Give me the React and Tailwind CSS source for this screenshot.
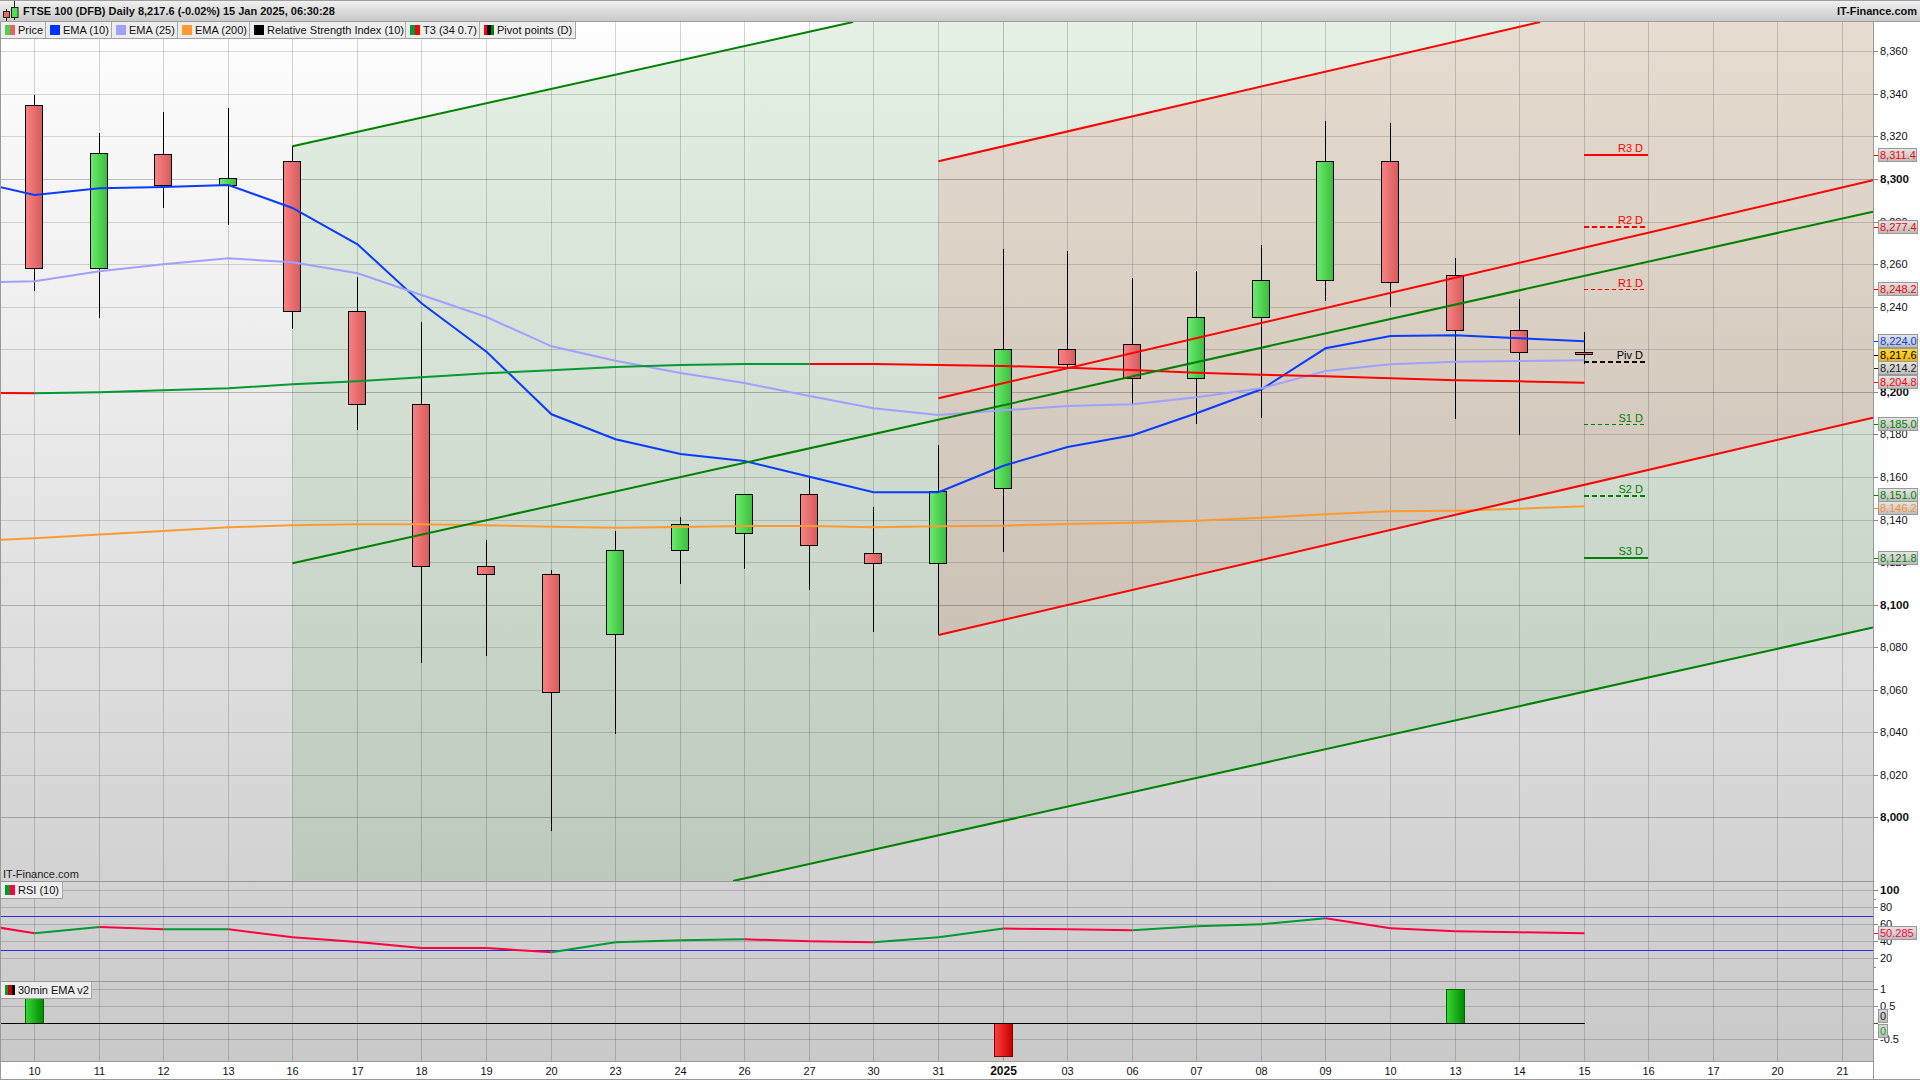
import React from "react";

const X = (i) => Math.round(34 + 64.57 * i) + 0.5;
const FONT = "font-['Liberation_Sans',Arial,sans-serif]";

const candles = [
  ["r", 95, 105.3, 268.3, 290.7],
  ["g", 133, 153.3, 268.3, 317.7],
  ["r", 112, 154.3, 185.3, 207.7],
  ["g", 108, 178.3, 185.3, 224.7],
  ["r", 146.3, 161.3, 311.3, 328.7],
  ["r", 277, 311.3, 404.3, 429.7],
  ["r", 322.3, 404.3, 566.3, 662.7],
  ["r", 540, 566.3, 574.3, 655.7],
  ["r", 570, 574.3, 692.3, 830.7],
  ["g", 531, 550.3, 634.3, 733.7],
  ["g", 517, 524.3, 550.3, 583.7],
  ["g", 494.3, 494.3, 533.3, 568.7],
  ["r", 477.7, 494.3, 545.3, 589.7],
  ["r", 507, 553.3, 563.3, 631.7],
  ["g", 445, 491.3, 563.3, 635],
  ["g", 249, 349.3, 488.3, 552],
  ["r", 251, 349.3, 364.7, 366.7],
  ["r", 278, 344.3, 378.3, 404],
  ["g", 271, 317.3, 378.3, 423.7],
  ["g", 245, 280.3, 317.3, 417.7],
  ["g", 121, 161.3, 280.3, 301],
  ["r", 123, 161.3, 282.3, 307],
  ["r", 258, 275.3, 330.3, 419],
  ["r", 299, 330.3, 352.3, 434.7],
];

const ema10 = [195, 188.3, 187, 185, 208, 244.3, 303.3, 351.7, 414.3, 439.3, 454, 461, 476.7, 492.3, 492.3, 465.7, 447, 435.3, 413.3, 389.3, 348.3, 336, 335.3, 338.3, 341.3];
const ema25 = [281.3, 271.3, 264.3, 258.3, 262.3, 273.3, 295, 317, 346.3, 360.7, 373, 383, 396, 408.3, 415, 410.3, 406, 404.3, 397.3, 388.3, 371, 364.3, 361.7, 361, 360.3];
const ema200 = [538.3, 534.5, 531, 527.3, 525.3, 524.3, 524.3, 525.3, 526.7, 527.7, 527, 526, 526, 527.3, 526.3, 525.7, 524, 522.7, 520.7, 517.7, 514.3, 511.3, 510.7, 508.7, 506.3];
const t3 = [393.3, 392.3, 390.3, 388.3, 384.3, 381.3, 377.3, 373.3, 370.3, 367, 365, 364, 364, 364, 365, 366, 367.7, 370, 372.7, 374.7, 376.3, 378.3, 380.3, 381.3, 382.7];
const rsi = [933.3, 927, 929.3, 929.3, 937.3, 942, 948, 948, 952.3, 942.3, 940.3, 939.3, 941.3, 942.3, 937.3, 928.5, 929.3, 930.3, 926.3, 924.3, 918.3, 928.3, 931.3, 932.3, 933.3];

const pts = (arr, from = 0, to = arr.length - 1) =>
  arr.slice(from, to + 1).map((y, k) => `${X(from + k)},${y}`).join(" ");

const dates = ["10", "11", "12", "13", "16", "17", "18", "19", "20", "23", "24", "26", "27", "30", "31", "2025", "03", "06", "07", "08", "09", "10", "13", "14", "15", "16", "17", "20", "21"];
const priceGrid = [51, 94, 136, 179, 222, 264, 307, 349, 392, 434, 477, 520, 562, 605, 647, 690, 732, 775, 817];
const strongGrid = [179, 392, 605, 817];

const priceLabels = [
  ["8,360", 51], ["8,340", 94], ["8,320", 136], ["8,300", 179, true], ["8,280", 222], ["8,260", 264],
  ["8,240", 307], ["8,200", 392, true], ["8,180", 434], ["8,160", 477], ["8,140", 520], ["8,120", 562],
  ["8,100", 605, true], ["8,080", 647], ["8,060", 690], ["8,040", 732], ["8,020", 775], ["8,000", 817, true],
  ["100", 890, true], ["80", 907], ["60", 924], ["40", 941], ["20", 958],
  ["1", 989], ["0.5", 1006], ["-0.5", 1039],
];
const minorTicks = [899, 967];

const tags = [
  ["8,311.4", 155, "#ff0000"],
  ["8,277.4", 227, "#ff0000"],
  ["8,248.2", 289, "#ff0000"],
  ["8,224.0", 341, "#0040ff"],
  ["8,217.6", 354.5, "#000000", true],
  ["8,214.2", 367.5, "#222222"],
  ["8,204.8", 382, "#ff0000"],
  ["8,185.0", 424, "#008000"],
  ["8,151.0", 494.5, "#008000"],
  ["8,146.2", 508, "#ff8f2e"],
  ["8,121.8", 558, "#008000"],
  ["50.285", 933, "#ff0040"],
];

const pivots = [
  ["R3 D", 155, "#ff0000", 2, null, 1648],
  ["R2 D", 227, "#ff0000", 2, "5 3", 1648],
  ["R1 D", 289.5, "#ff0000", 1, "4 3", 1644],
  ["Piv D", 362, "#000000", 2, "5 3", 1648],
  ["S1 D", 424.5, "#008000", 1, "4 3", 1644],
  ["S2 D", 496, "#008000", 2, "5 3", 1648],
  ["S3 D", 558, "#008000", 2, null, 1648],
];

function VGrid({ y1, y2 }) {
  return dates.map((d, i) => (
    <line key={i} x1={X(i)} x2={X(i)} y1={y1} y2={y2} stroke="#000000" strokeOpacity={d === "2025" ? 0.22 : 0.16} shapeRendering="crispEdges" />
  ));
}

function HLine({ y, o = 0.15, color = "#000000", x2 = 1873, w = 1 }) {
  return <line x1="1" x2={x2} y1={y + 0.5} y2={y + 0.5} stroke={color} strokeOpacity={o} strokeWidth={w} shapeRendering="crispEdges" />;
}

function Candle({ i, c }) {
  const [col, wt, bt, bb, wb] = c;
  const x = X(i);
  return (
    <g shapeRendering="crispEdges">
      <line x1={x} x2={x} y1={wt} y2={wb} stroke="#000" />
      <rect x={x - 9} y={Math.round(bt) + 0.5} width="17" height={Math.round(bb - bt)} fill={col === "g" ? "url(#cg)" : "url(#cr)"} stroke="#000" />
    </g>
  );
}

function Swatch({ colors }) {
  return (
    <span className="flex w-[10px] h-[10px] shrink-0">
      {colors.map((c, i) => (
        <span key={i} className="flex-1 h-full" style={{ background: c }} />
      ))}
    </span>
  );
}

function LegendItem({ colors, label, w }) {
  return (
    <div className={`flex items-center gap-[3px] pl-[4px] h-full border-r border-[#a8a8a8] whitespace-nowrap text-[#111] ${w}`}>
      <Swatch colors={colors} />
      <span>{label}</span>
    </div>
  );
}

function MainChart() {
  return (
    <svg className="block w-full h-full" viewBox="1 22 1872 859">
      <defs>
        <linearGradient id="cr" x1="0" x2="1" y1="0" y2="0">
          <stop offset="0" stopColor="#f98282" />
          <stop offset="1" stopColor="#d65c5c" />
        </linearGradient>
        <linearGradient id="cg" x1="0" x2="1" y1="0" y2="0">
          <stop offset="0" stopColor="#6cec6c" />
          <stop offset="1" stopColor="#3cbc3c" />
        </linearGradient>
      </defs>
      <polygon points="292.5,146.3 853,22 1873,22 1873,627.5 733,881 292.5,881" fill="#008000" fillOpacity="0.1" />
      <polygon points="938.5,161.3 1540,22 1873,22 1873,417.7 938.5,635" fill="#ff0000" fillOpacity="0.085" />
      <VGrid y1={22} y2={881} />
      {priceGrid.map((y) => (
        <HLine key={y} y={y} o={strongGrid.includes(y) ? 0.24 : 0.15} />
      ))}
      {candles.map((c, i) => (
        <Candle key={i} i={i} c={c} />
      ))}
      <g shapeRendering="crispEdges">
        <line x1={X(24)} x2={X(24)} y1="332" y2="364" stroke="#000" />
        <rect x={X(24) - 9} y="352.5" width="17" height="2" fill="url(#cr)" stroke="#000" />
      </g>
      <g fill="none" strokeWidth="2">
        <polyline points={`0,187 ${pts(ema10)}`} stroke="#0a3cff" />
        <polyline points={`0,282 ${pts(ema25)}`} stroke="#a0a0ff" />
        <polyline points={`0,539.7 ${pts(ema200)}`} stroke="#ff9a33" />
        <polyline points={`0,393 ${X(0)},393.3`} stroke="#ff0000" />
        <polyline points={pts(t3, 0, 12)} stroke="#009933" />
        <polyline points={pts(t3, 12, 24)} stroke="#ff0000" />
        <line x1="292.5" y1="146.3" x2="853" y2="22" stroke="#008000" />
        <line x1="292.5" y1="563.3" x2="1873" y2="211.7" stroke="#008000" />
        <line x1="733" y1="881" x2="1873" y2="627.5" stroke="#008000" />
        <line x1="938.5" y1="161.3" x2="1540" y2="22" stroke="#ff0000" />
        <line x1="938.5" y1="398.3" x2="1873" y2="180.3" stroke="#ff0000" />
        <line x1="938.5" y1="635" x2="1873" y2="417.7" stroke="#ff0000" />
      </g>
      {pivots.map(([label, y, color, w, dash, end]) => (
        <g key={label}>
          <line x1="1584" x2={end} y1={y} y2={y} stroke={color} strokeWidth={w} strokeDasharray={dash || undefined} shapeRendering="crispEdges" />
          <text x="1643" y={y - 3} textAnchor="end" fill={color} fontSize="11">{label}</text>
        </g>
      ))}
    </svg>
  );
}

function RsiChart() {
  return (
    <svg className="block w-full h-full" viewBox="1 882 1872 99">
      <VGrid y1={882} y2={981} />
      {[890, 907, 924, 941, 958].map((y) => (
        <HLine key={y} y={y} o={0.16} />
      ))}
      <HLine y={916} o={1} color="#2a2ae6" />
      <HLine y={950} o={1} color="#2a2ae6" />
      <g fill="none" strokeWidth="2">
        <polyline points={`0,927.7 ${pts(rsi, 0, 0)}`} stroke="#ff0040" />
        {rsi.slice(0, -1).map((y, i) => {
          const n = rsi[i + 1];
          const green = [0, 2, 8, 9, 10, 13, 14, 17, 18, 19].includes(i);
          return <line key={i} x1={X(i)} y1={y} x2={X(i + 1)} y2={n} stroke={green ? "#009933" : "#ff0040"} />;
        })}
      </g>
    </svg>
  );
}

function EmaChart() {
  return (
    <svg className="block w-full h-full" viewBox="1 982 1872 79">
      <defs>
        <linearGradient id="bg" x1="0" x2="1" y1="0" y2="0">
          <stop offset="0" stopColor="#36d836" />
          <stop offset="1" stopColor="#008a00" />
        </linearGradient>
        <linearGradient id="br" x1="0" x2="1" y1="0" y2="0">
          <stop offset="0" stopColor="#ff4040" />
          <stop offset="1" stopColor="#c40000" />
        </linearGradient>
      </defs>
      <VGrid y1={982} y2={1061} />
      {[989, 1006, 1039].map((y) => (
        <HLine key={y} y={y} o={0.16} />
      ))}
      <g shapeRendering="crispEdges">
        <rect x={X(0) - 9} y="989.5" width="18" height="33.5" fill="url(#bg)" stroke="#006600" />
        <rect x={X(22) - 9} y="989.5" width="18" height="33.5" fill="url(#bg)" stroke="#006600" />
        <rect x={X(15) - 9} y="1023.5" width="18" height="33" fill="url(#br)" stroke="#800000" />
      </g>
      <line x1="1" x2={X(24)} y1="1023.5" y2="1023.5" stroke="#000" shapeRendering="crispEdges" />
    </svg>
  );
}

export default function App() {
  return (
    <div className={`${FONT} w-[1920px] h-[1080px] flex flex-col bg-white border-b border-[#999] overflow-hidden text-[11px] text-[#111]`}>
      <header className="h-[22px] shrink-0 flex items-center justify-between border-y border-[#9c9c9c] bg-gradient-to-b from-[#f0f0f0] to-[#c9c9c9] pl-[3px] pr-[3px] font-bold text-[11px]">
        <div className="flex items-center gap-[4px]">
          <svg width="16" height="20" viewBox="0 0 16 20">
            <line x1="3.5" x2="3.5" y1="8" y2="20" stroke="#222" />
            <rect x="0.5" y="10.5" width="6" height="6" fill="#e86a6a" stroke="#222" />
            <line x1="11.5" x2="11.5" y1="0" y2="19" stroke="#222" />
            <rect x="8.5" y="6.5" width="6.5" height="10" fill="#55dd55" stroke="#222" />
          </svg>
          <span>FTSE 100 (DFB) Daily 8,217.6 (-0.02%) 15 Jan 2025, 06:30:28</span>
        </div>
        <span>IT-Finance.com</span>
      </header>

      <div className="flex flex-1 min-h-0">
        <div className="w-[1874px] h-full flex flex-col border-x border-[#999] bg-gradient-to-b from-[#fefefe] to-[#c8c8c8]">
          <section className="relative h-[859px]">
            <MainChart />
            <div className="absolute left-0 top-0 h-[17px] flex bg-[#ededed] border-b border-[#a0a0a0]">
              <LegendItem w="w-[45px]" colors={["#50d050", "#e06464"]} label="Price" />
              <LegendItem w="w-[66px]" colors={["#0033ff"]} label="EMA (10)" />
              <LegendItem w="w-[66px]" colors={["#a0a0ff"]} label="EMA (25)" />
              <LegendItem w="w-[72px]" colors={["#ff9933"]} label="EMA (200)" />
              <LegendItem w="w-[156px]" colors={["#000000"]} label="Relative Strength Index (10)" />
              <LegendItem w="w-[74px]" colors={["#009933", "#ff0000"]} label="T3 (34 0.7)" />
              <LegendItem w="w-[96px]" colors={["#ff0000", "#000000", "#008000"]} label="Pivot points (D)" />
            </div>
            <span className="absolute left-[2px] bottom-0 text-[#222] leading-[13px]">IT-Finance.com</span>
          </section>

          <section className="relative h-[100px] border-t border-[#999]">
            <RsiChart />
            <div className="absolute left-0 top-0 h-[17px] w-[62px] flex bg-[#ededed] border-b border-[#a0a0a0]">
              <LegendItem w="w-[62px]" colors={["#009933", "#ff0040"]} label="RSI (10)" />
            </div>
          </section>

          <section className="relative h-[80px] border-t border-[#999]">
            <EmaChart />
            <div className="absolute left-0 top-0 h-[17px] w-[91px] flex bg-[#ededed] border-b border-[#a0a0a0]">
              <LegendItem w="w-[91px]" colors={["#009933", "#cc0000", "#000000"]} label="30min EMA v2" />
            </div>
          </section>

          <div className="relative flex-1 border-t border-[#999] bg-white">
            {dates.map((d, i) => (
              <span
                key={i}
                className={`absolute top-[2px] -translate-x-1/2 leading-[14px] ${d === "2025" ? "font-bold text-[12px]" : ""}`}
                style={{ left: X(i) - 1 }}
              >
                {d}
              </span>
            ))}
          </div>
        </div>

        <aside className="relative flex-1 bg-white">
          {priceLabels.map(([t, y, bold]) => (
            <React.Fragment key={t}>
              <span className="absolute left-0 w-[4px] h-px bg-[#888]" style={{ top: y - 22 }} />
              <span
                className={`absolute left-[6px] leading-[14px] ${bold ? "font-bold text-[11.6px]" : "text-[11px]"}`}
                style={{ top: y - 22 - 7 }}
              >
                {t}
              </span>
            </React.Fragment>
          ))}
          {minorTicks.map((y) => (
            <span key={y} className="absolute left-0 w-[2px] h-px bg-[#888]" style={{ top: y - 22 }} />
          ))}
          {tags.map(([t, y, c, hi]) => (
            <React.Fragment key={t}>
              <span className="absolute left-0 w-[4px] h-px" style={{ top: y - 22, background: c }} />
              <span
                className={`absolute left-[4px] h-[14px] min-w-[39px] pl-[1px] leading-[12px] text-[11px] border border-[#999] ${hi ? "bg-gradient-to-b from-[#ffd633] to-[#f0b800]" : "bg-gradient-to-b from-[#e4e4e4] to-[#bdbdbd]"}`}
                style={{ top: y - 22 - 7, color: c }}
              >
                {t}
              </span>
            </React.Fragment>
          ))}
          <span className="absolute left-[4px] top-[987px] h-[14px] px-[1px] leading-[12px] text-[11px] border border-[#999] bg-gradient-to-b from-[#d8d8d8] to-[#bdbdbd] text-[#222]">0</span>
          <span className="absolute left-[4px] top-[1002px] h-[14px] px-[1px] leading-[12px] text-[11px] border border-[#999] bg-gradient-to-b from-[#d8d8d8] to-[#bdbdbd] text-[#11aa11]">0</span>
          <span className="absolute left-0 top-[1001px] w-[4px] h-px bg-[#008000]" />
        </aside>
      </div>
    </div>
  );
}
